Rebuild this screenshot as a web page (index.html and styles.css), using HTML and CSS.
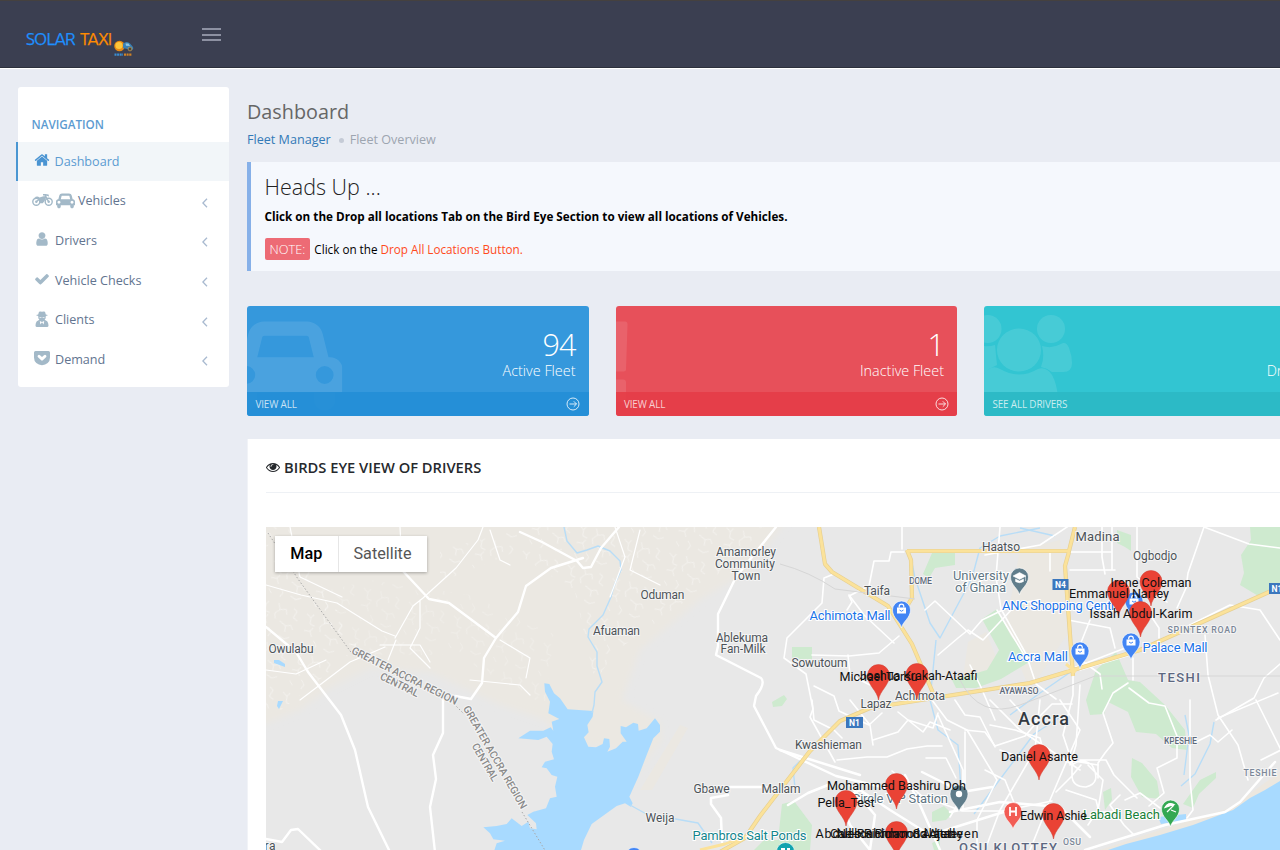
FILE: index.html
```html
<!DOCTYPE html>
<html lang="en">
<head>
<meta charset="utf-8">
<title>Solar Taxi - Fleet Dashboard</title>
<link rel="stylesheet" href="styles.css">
</head>
<body>
<svg class="defs" width="0" height="0" aria-hidden="true">
  <symbol id="car" viewBox="0 0 2048 1792"><path d="M480 1088q0-66-47-113t-113-47-113 47-47 113 47 113 113 47 113-47 47-113zm36-320h1016l-89-357q-2-8-14-17.500t-21-9.500h-768q-9 0-21 9.500t-14 17.500zm1372 320q0-66-47-113t-113-47-113 47-47 113 47 113 113 47 113-47 47-113zm160-96v384q0 14-9 23t-23 9h-96v128q0 80-56 136t-136 56-136-56-56-136v-128h-1024v128q0 80-56 136t-136 56-136-56-56-136v-128h-96q-14 0-23-9t-9-23v-384q0-93 65.500-158.500t158.500-65.500h28l105-419q23-94 104-157.500t179-63.500h768q98 0 179 63.500t104 157.500l105 419h28q93 0 158.500 65.500t65.500 158.500z"/></symbol>
  <symbol id="chev" viewBox="0 0 6 10"><path d="M5 .8.9 5 5 9.200" fill="none" stroke="currentColor" stroke-width="1.300"/></symbol>
  <symbol id="go" viewBox="0 0 14 14"><g fill="none" stroke="currentColor" stroke-width=".9"><circle cx="7" cy="7" r="6"/><path d="M3.500 7h7M7.800 4.300 10.500 7 7.800 9.700"/></g></symbol>
</svg>

<header class="topbar">
  <div class="brand">
    <span class="brand-solar">SOLAR</span><span class="brand-taxi">TAXI</span>
    <svg class="brand-mark" viewBox="0 0 21 18">
      <circle cx="6.500" cy="7" r="5.300" fill="#e98a12"/><circle cx="6" cy="6.500" r="3.600" fill="#fdc53b"/>
      <path d="M10 4.500q4-3 7 0l3 3.500q1 3-2 3l-8-2z" fill="#3a80b4"/><path d="M12.500 4.500h3l1.500 2.500-4-.3z" fill="#8fc4e0"/>
      <circle cx="17" cy="10" r="1.900" fill="#4b4638" stroke="#c5a05a" stroke-width=".7"/>
      <path d="M1.500 15.700h8.500" stroke="#3c8ed0" stroke-width="2.200" stroke-dasharray="2 .6"/><path d="M11 15.700h8" stroke="#d18325" stroke-width="2.200" stroke-dasharray="2 .6"/>
    </svg>
  </div>
  <div class="burger"><i></i><i></i><i></i></div>
</header>

<div class="page">
  <nav class="sidebar">
    <h3>NAVIGATION</h3>
    <ul>
      <li class="active"><svg class="ic" viewBox="0 0 1792 1792"><path d="M1472 992v480q0 26-19 45t-45 19h-384v-384h-256v384h-384q-26 0-45-19t-19-45v-480q0-1 .5-3t.5-3l575-474 575 474q1 2 1 6zm223-69l-62 74q-8 9-21 11h-3q-13 0-21-7l-692-577-692 577q-12 8-24 7-13-2-21-11l-62-74q-8-10-7-23.500t11-21.500l719-599q32-26 76-26t76 26l244 204v-195q0-14 9-23t23-9h192q14 0 23 9t9 23v408l219 182q10 8 11 21.500t-7 23.500z"/></svg><span>Dashboard</span></li>
      <li><svg class="ic moto" viewBox="0 0 21 14"><g fill="none" stroke="currentColor" stroke-width="1.400"><circle cx="4.300" cy="8.800" r="3.500"/><circle cx="16.700" cy="8.800" r="3.500"/><path d="M4.300 8.800 8 5.500M10 9.500l3.500-5.500M16.700 8.800 13 2M11 1.800h2.500l2.500.4"/></g><path d="M2.500 4.200q3-1.500 5 .2l4-1.200h2.800l-1 3.600-2.500 3.400H7.500Q7.500 7 5 5.500zM14.500 2.300l2.300-.8v2.300z"/><circle cx="4.300" cy="8.800" r="1.200"/><circle cx="16.700" cy="8.800" r="1.200"/></svg><svg class="ic carico"><use href="#car"/></svg><span>Vehicles</span><svg class="chev"><use href="#chev"/></svg></li>
      <li><svg class="ic" viewBox="0 0 1792 1792"><path d="M1536 1399q0 109-62.500 187t-150.500 78h-854q-88 0-150.500-78t-62.500-187q0-85 8.500-160.500t31.500-152 58.500-131 94-89 134.500-34.500q131 128 313 128t313-128q76 0 134.500 34.500t94 89 58.500 131 31.500 152 8.500 160.500zm-256-887q0 159-112.500 271.500t-271.500 112.500-271.500-112.500-112.500-271.500 112.500-271.500 271.500-112.500 271.500 112.500 112.500 271.500z"/></svg><span>Drivers</span><svg class="chev"><use href="#chev"/></svg></li>
      <li><svg class="ic" viewBox="0 0 1792 1792"><path d="M1671 566q0 40-28 68l-724 724-136 136q-28 28-68 28t-68-28l-136-136-362-362q-28-28-28-68t28-68l136-136q28-28 68-28t68 28l294 295 656-657q28-28 68-28t68 28l136 136q28 28 28 68z"/></svg><span>Vehicle Checks</span><svg class="chev"><use href="#chev"/></svg></li>
      <li><svg class="ic" viewBox="0 0 16 16"><path fill-rule="evenodd" d="M5 .8q1.500-.6 3 0 1.500-.6 3 0l.8 2.700 2 .5q.3.600-2 1.100l-.2 2.400-1 1.200 1.700 1q2 .8 2.200 5-.1 1.300-1.500 1.300H3q-1.400 0-1.500-1.300.2-4.200 2.200-5l1.700-1-1-1.200-.2-2.400q-2.300-.5-2-1.100l2-.5zM5.400 6.200l.5 1 1.500-.6h1.200l1.500.6.5-1zM5.800 10l.6 3.600L8 11.300l1.600 2.300.6-3.600L8 11z"/></svg><span>Clients</span><svg class="chev"><use href="#chev"/></svg></li>
      <li><svg class="ic pocket" viewBox="0 0 16 16"><path fill-rule="evenodd" d="M1.500 1h13q1.500 0 1.500 1.500v5q0 3.500-2.300 5.600T8 15.200 2.300 13.100 0 7.500v-5Q0 1 1.500 1zM4 5.200q-1 1.100 0 2l3.200 3.100q.8.700 1.600 0L12 7.200q1-.9 0-2-1-1-2 0l-2 1.900-2-1.900q-1-1-2 0z"/></svg><span>Demand</span><svg class="chev"><use href="#chev"/></svg></li>
    </ul>
  </nav>

  <main class="content">
    <h1>Dashboard</h1>
    <div class="crumbs"><a>Fleet Manager</a><i></i><span>Fleet Overview</span></div>

    <section class="callout">
      <h2>Heads Up ...</h2>
      <p class="strong">Click on the Drop all locations Tab on the Bird Eye Section to view all locations of Vehicles.</p>
      <p class="note"><b>NOTE:</b><span>Click on the <em>Drop All Locations Button.</em></span></p>
    </section>

    <section class="cards">
      <article class="card blue">
        <svg class="ghost" viewBox="0 0 342 110"><svg x="-18.500" y="8.400" width="114" height="99.800"><use href="#car"/></svg></svg>
        <div class="figures"><strong>94</strong><span>Active Fleet</span></div>
        <footer><span>VIEW ALL</span><svg><use href="#go"/></svg></footer>
      </article>
      <article class="card red">
        <svg class="ghost" viewBox="0 0 342 110"><path d="M-12 15.500H9q2.500 0 2.500 3L10 63q0 2.500-2.500 2.500H-10zM-12 73.500H7q3 0 3 3V93q0 3-3 3h-19z"/></svg>
        <div class="figures"><strong>1</strong><span>Inactive Fleet</span></div>
        <footer><span>VIEW ALL</span><svg><use href="#go"/></svg></footer>
      </article>
      <article class="card teal">
        <svg class="ghost" viewBox="0 0 342 110"><circle cx="3.500" cy="23" r="14"/><circle cx="67" cy="23" r="14"/><path d="M0 40q5 1 11-1 1 11 2 20l-8 4-5 5zM58 40q10 3 19-2 5-3 8 4 3 8 3 15 0 9-9 9H68q-5-4-11-5 4-10 1-21z"/><ellipse cx="35" cy="44" rx="22" ry="21.500"/><path d="M0 68q7-10 16-5 19 11 38 0 8-3 14 6 5 9 6 23v4H0z"/></svg>
        <div class="figures"><strong>&nbsp;</strong><span>Drivers</span></div>
        <footer><span>SEE ALL DRIVERS</span><svg><use href="#go"/></svg></footer>
      </article>
    </section>

    <section class="panel">
      <div class="panel-title"><svg viewBox="0 0 1792 1792"><path d="M1664 960q-152-236-381-353 61 104 61 225 0 185-131.500 316.500t-316.500 131.500-316.500-131.500-131.500-316.500q0-121 61-225-229 117-381 353 133 205 333.500 326.500t434.500 121.500 434.500-121.500 333.500-326.500zm-720-384q0-20-14-34t-34-14q-125 0-214.500 89.500t-89.500 214.500q0 20 14 34t34 14 34-14 14-34q0-86 61-147t147-61q20 0 34-14t14-34zm848 384q0 34-20 69-140 230-376.500 368.500t-499.500 138.500-499.500-139-376.500-368q-20-35-20-69t20-69q140-229 376.500-368t499.500-139 499.500 139 376.500 368q20 35 20 69z"/></svg><span>BIRDS EYE VIEW OF DRIVERS</span></div>
      <div class="map">
<svg class="map-canvas" viewBox="266 527 1014 323">
  <defs>
    <pattern id="lanes" width="47" height="41" patternUnits="userSpaceOnUse" patternTransform="rotate(17)"><path d="M3 5l5 3 2-4M8 8l1 6 5 1M20 3l3 6 6-2 2 5M23 9l-4 5 2 5M36 4l4 2M40 6l-2 7 5 2M5 22l6-1 3 5M11 21l2-4M26 20l7 3 1 6M33 23l5-2 3 4M17 29l4 4-2 5M6 33l4 4M29 34l6 2 5-3" fill="none" stroke="#fff" stroke-width=".8"/></pattern>
    <filter id="soft"><feGaussianBlur stdDeviation="3"/></filter>
    <g id="pin"><path d="M0 0C-1-9-11-15-11-24.500A11 11 0 0 1 11-24.500C11-15 1-9 0 0z" fill="#ea4335" stroke="#cf3f33" stroke-width=".5"/></g>
    <g id="poi"><path d="M0 18C-.8 12-9 8-9 0A9 9 0 0 1 9 0C9 8 .8 12 0 18z"/></g>
    <g id="bag"><path d="M-4.500-2.500h9v6h-9z" fill="#fff"/><path d="M-2.300-2.500v-1a2.300 2.300 0 0 1 4.600 0v1" fill="none" stroke="#fff" stroke-width="1.200"/><path d="M-2 0q2 2.500 4 0" fill="none" stroke="#4285f4"/></g>
  </defs>
  <rect x="266" y="527" width="1014" height="323" fill="#e8e8e8"/>

  <!-- undeveloped land -->
  <path filter="url(#soft)" fill="#ebe8e2" d="M255 515H790L750 570 700 600 640 650 622 700 660 722 662 740 625 790 645 735 630 752 560 740 545 720 500 705 430 672 370 668 330 688 300 710 255 728z"/>
  <path fill="url(#lanes)" opacity=".5" d="M266 527h22l70 120-35 30-57 45zM440 550l90-23h235l-60 60-90 65-20 30-20-90-60-40-75 30z"/>
  <path fill="url(#lanes)" opacity=".3" d="M290 600l80-20 100 15 85 40-10 70-90-50-90 0z"/>
  <path fill="#ebe8e2" d="M1020 550l40-10 10 90-40 60-25-60zM968 642l18-10 10 25-5 25-28-5zM640 790l40-65 8 3-36 62z"/>
  <path fill="#ece7df" d="M1100 850l60-20 70-22 50-36v16l-60 42-100 20z"/>

  <!-- parks -->
  <g fill="#ceeacf">
    <path d="M1250 527h30v63l-8 2-12 5-20-12 4-12-3-18 10-15zM1117 530l14 5v16l-6-4-8-4zM932 553h23v12l-20 3-6 10-6-4zM792 647h20v12h-20zM772 702l12-7 3 4-5 7-9 1zM982 619l15-10 14 27 20 25-30 18-25 9-20 0-4-8 35-10 12-20z"/>
    <path d="M1128 680l12 2 25 23 20 25 2 20-15-2-16-14-20-2-8-20-20-10-4 12-14 1-4-15 10-30 20-18zM1132 758l10 5 15 18 3 18-18-2-11-20zM1200 780l16-8v6l-17 16-6 14-10-4zM1103 792l8-4 1 12-7 10zM782 804l12-3 18 24-2 25h-56l10-10h14zM932 812l12-6 8 8-6 6-14 2zM932 843l8-4v11h-6z"/>
  </g>

  <!-- water -->
  <g fill="#a8daff">
    <path transform="translate(500 520) scale(.33333)" d="M133 490L148 492 162 520 180 535 203 568 280 573 278 590 262 615 266 637 252 652 265 680 288 682 308 672 312 655 328 657 330 680 322 695 348 685 368 665 380 665 362 640 362 618 378 622 400 608 414 612 416 632 440 625 465 595 480 615 480 635 460 655 440 705 415 770 388 830 398 850 392 860 375 850 350 858 275 912 252 960 240 1000H-20L-10 970 15 962-20 958-30 940-50 922-10 918 20 912 35 895 65 918 85 905 90 925 110 928 108 910 82 885 100 875 138 865 150 835 170 830 165 800 172 770 155 765 140 745 125 742 135 725 162 718 155 695 158 672 140 650 115 660 55 655 90 632 130 632 152 622 160 632 155 605 178 597 145 580 150 545 135 515z"/>
    <path d="M274 660l5 0 6 4 0 3-11-4zM278 701l5 0-4 8-2-3zM1108 850l18-6 34-9 33-10 40-15 17-12 15-8 15-9v70H1108z"/>
    <path d="M1158 817l28-3v6l-25 4z"/>
  </g>
  <g fill="none" stroke="#b8ddf7" stroke-width="1.400" stroke-linejoin="round">
    <path d="M564 527l3 14 10 12 10-3 11-4 12 5 10 10 1 9-5 11-3 8-2 8-8 18-14 14-1 8 9 15 0 14 5 16-7 10-1 13-2 8M630 805l20 11 20 2 28 5 14 20M808 753l-15 15 2 20M1040 528l-40 8-20 12-8 30-32 60-10-15-15-45-3-15M936 640l-6 60 8 30 20 15 4 60M1062 716l-28 18-60 80M1185 715l4 20-5 40M1214 722l-4 22-15 30-14 12M1010 715l30-22 35-24M1020 528l35 8"/>
  </g>

  <!-- streets -->
  <g fill="none" stroke="#fff" stroke-linejoin="round" stroke-linecap="round">
    <g stroke-width="2.400">
      <path d="M266 627l30 25 12 20 33 43 14 35 13 57 22 45M266 839l16 3 9-12 7-1 25 24"/>
      <path d="M402 570l27 29 20 4 47 35M520 532l22 10 35 19 6 7 8-1 10-19 18-21M583 558l-32 10-25 18-8 26-22 26-12 20-2 25-11 16-16-3"/>
      <path d="M443 698v35l-10 22 3 24-6 28 5 45M776 527l-40 50-18 37 0 32-2 9 45 23q5 5-5 18l-2 10 22 42 60 28 50 12"/>
    </g>
    <g stroke-width="1.200">
      <path d="M266 585l35 10 36 8 45 28 13 5M290 527l10 50 42 20M395 638l18-32 10-8 33-30 22-28 5-13M396 640l-8 20M420 600v28l-10 20 20 20M380 645l40 0 10 17M266 670l30 4 30-14M300 700l50-38 35-15M500 640l30 18-4 20M470 680l50 5 10 10M400 527l1 20M490 530l10 30 10 5M615 527l10 30-15 40M640 530l-10 40 30 15"/>
    </g>
    <g stroke-width="1.600">
      <path d="M834 574l-10 4-2 25-35 35-3 20 22 16 7 35-3 8 25 45M847 610l5-8-3-6 20-10 5-25h15l2-9h13M902 527l0 22M925 610l10-9 35 33 12-14 31-15 25-5"/>
      <path d="M849 595l15 20 30 28M812 655l37 1 30-3 20-17M848 655l2 20 20 10M814 686l20 10 5 15 30 14 13-12M812 700l2 20 20 10 8 8M850 700l20 25 3 20M837 760l30-3 20 0 20-8 20-3 15 0M873 740l25-8 10-12 25 8 5-15M898 712l25 20 7-10 20 8M926 758l20 0 10 20M938 715l25 55 0 40M965 730l20 2 10 14 30-10 12-14M990 725l25 5 25 8 5 20"/>
      <path d="M938 655l20-17 10-8 15 10 30-32M932 700l15 20 20 10 30 50-20 40 0 30M965 732v60l-15 25M990 700l30 30 60 40M955 700l10 15 15 2 15 30M970 665l10 20 15 35M1000 527l-4 50 5 32 25 45 10 30 20 15M985 555l55-10 30-20M997 610l32 53M1010 700l22 24 20-20 20 0M1050 551v20M1068 552h44l0-25M1112 552v18M1070 570h20l25 0M1102 527v30l3 17M1137 527v50l30 25M1204 527l-16 46-2 15-9 20"/>
      <path d="M1204 527l45 17 31 4M1068 620l42 8 5 20M1090 620l-10 25M1070 652l30 22 2 15M1068 670l60-23M1147 610l12 18 0 10M1080 670l50-15 100-50 30 5 20 30M1133 658v22M1205 635l3 40 10 40 20 30 10 35M1216 720l38-22 10-20 16-14M1256 700l25 50-20 10M1080 685l-4 60-6 20M1073 675v20l-10 40 10 30M1128 683l-15 10-10 20 10 30-8 10-7 10 0 15M1129 688l20 15 16 3 12 30 0 22-20 10 7 25-15 13"/>
      <path d="M1080 760l26 0 8 15 23 23M1068 760l30 5M1072 765q10-8 20 0 10 18-6 22-14 0-14-12zM1056 792l15-15 10-12M1066 790l30 10 3 12 20 0M1088 765l15 15-5 30-10 15M1125 800l15-7 20 15M1120 795l-10 10 14 20 10 10M1052 801l-50 10-40 0-40-15-30-25M1040 700l-5 50-35 60-15 40M1060 700l20 30-30 70-20 50M1000 750l30 10 20-10M985 770l20 10 12 30M1190 700v80l3 30-6 8M1190 745l20-10 8 7 14-12M1218 718l60-25"/>
    </g>
    <g stroke-width="2.500"><path d="M1085 850l80-25 60-13 15-10 35-40M780 750l80 25M840 800l20-10 30 20 40 25 80-25M950 812l50-10 60 5 30 30M840 800l10 25 20 25M905 775l15 30 20 45M922 772l40 20 30-5M850 785l25 30-5 35M730 787l35 0 20 4M728 795l-17 3 0 6 10 14 1 24M788 805l20-12 20-8"/></g>
  </g>

  <!-- highways -->
  <g fill="none" stroke-linejoin="round">
    <path stroke="#e6cf91" stroke-width="4.200" d="M819 527l6 37 7 8 56 34 24 38 21 49M907 550l4 10 1 38-11 18M907 551h162l6-24M1069 552l-4 14 8 110M1280 587l-60 27-80 36-110 33-160 25-30 13-30 30-50 65-15 22-25 14-18 8"/>
    <path stroke="#fbe29a" stroke-width="2.900" d="M819 527l6 37 7 8 56 34 24 38 21 49M907 550l4 10 1 38-11 18M907 551h162l6-24M1069 552l-4 14 8 110M1280 587l-60 27-80 36-110 33-160 25-30 13-30 30-50 65-15 22-25 14-18 8M1066 664l10 8M700 850l25-6 25-9"/>
  </g>
  <path d="M268 533l30 46 55 76M454 704l10 10M522 812l24 40" fill="none" stroke="#aaa" stroke-width="1" stroke-dasharray="1.500 2"/>
  <path d="M780 564q30 8 55 25l80 10M960 680q20 40 60 25t75-29h190" fill="none" stroke="#d6d6d6"/>

  <!-- place names -->
  <g class="place" text-anchor="middle">
    <text x="291" y="653" textLength="45">Owulabu</text><text x="270" y="850" textLength="11">ra</text>
    <text x="662.500" y="599" textLength="44">Oduman</text><text x="616.500" y="635" textLength="47">Afuaman</text>
    <text x="746" y="556" textLength="60">Amamorley</text><text x="745" y="568" textLength="60">Community</text><text x="746" y="579.500" textLength="29">Town</text>
    <text x="742" y="641.500" textLength="52">Ablekuma</text><text x="743" y="653" textLength="45">Fan-Milk</text>
    <text x="819.500" y="666.500" textLength="56">Sowutoum</text><text x="877" y="594.500" textLength="26">Taifa</text>
    <text x="1001" y="550.500" textLength="38">Haatso</text><text x="1097.500" y="541" textLength="44" class="mid">Madina</text>
    <text x="1155" y="559.500" textLength="44">Ogbodjo</text><text x="920" y="700" textLength="50">Achimota</text><text x="876" y="708" textLength="31">Lapaz</text>
    <text x="828.500" y="749" textLength="67">Kwashieman</text><text x="711.500" y="792.500" textLength="36">Gbawe</text><text x="781" y="793" textLength="39">Mallam</text><text x="660" y="821.500" textLength="29">Weija</text>
    <g class="area"><text x="920.500" y="584" textLength="23">DOME</text><text x="1019" y="694" textLength="39">AYAWASO</text><text x="1180.500" y="743.500" textLength="33">KPESHIE</text></g>
    <g class="wide"><text x="1202" y="633" textLength="69">SPINTEX ROAD</text><text x="1260" y="776" textLength="33">TESHIE</text><text x="1072" y="845" textLength="18">OSU</text></g>
    <g class="district"><text x="1179" y="682" textLength="42">TESHI</text><text x="1008" y="852" textLength="98">OSU KLOTTEY</text></g>
    <text x="1043.500" y="725" textLength="51" class="city">Accra</text>
    <g class="region"><text transform="translate(403 679) rotate(26.500)" textLength="117">GREATER ACCRA REGION</text><text transform="translate(398 688) rotate(26.500)" textLength="42">CENTRAL</text><text transform="translate(492 759) rotate(60)" textLength="117">GREATER ACCRA REGION</text><text transform="translate(482 764) rotate(60)" textLength="42">CENTRAL</text></g>
  </g>

  <!-- points of interest -->
  <g class="poi-label">
    <g fill="#1a73e8"><text x="809.500" y="619.500" textLength="81">Achimota Mall</text><text x="1002" y="609.500" textLength="120">ANC Shopping Centre</text><text x="1008" y="660.500" textLength="60">Accra Mall</text><text x="1142.500" y="651.500" textLength="65">Palace Mall</text></g>
    <g fill="#607583"><text x="953" y="580" textLength="56">University</text><text x="955" y="592" textLength="51">of Ghana</text><text x="852" y="803" textLength="96">Circle VIP Station</text></g>
    <text x="692.500" y="840" textLength="114" fill="#12858d">Pambros Salt Ponds</text><text x="1083" y="819" textLength="77" fill="#188038">Labadi Beach</text>
  </g>
  <g fill="#4285f4" stroke="#fff" stroke-width=".6"><use href="#poi" x="901.500" y="610"/><use href="#poi" x="1080" y="651"/><use href="#poi" x="1131" y="642"/><use href="#poi" x="1134" y="601"/><circle cx="634" cy="856" r="8.500"/></g>
  <use href="#bag" x="901.500" y="610"/><use href="#bag" x="1080" y="651"/><use href="#bag" x="1131" y="642"/><use href="#bag" x="1134" y="601"/>
  <g fill="#607d8b" stroke="#fff" stroke-width=".6"><use href="#poi" x="1019.500" y="577"/><use href="#poi" x="959" y="794"/></g>
  <path d="M1013 576l6.500-3.500 6.500 3.500-6.500 3.500zM1015.500 579v2.500q4 2.500 8 0V579l-4 2zM1025.500 576v5" fill="#fff" stroke="#fff" stroke-width=".5"/><circle cx="959" cy="794" r="3.200" fill="#fff"/>
  <g stroke="#fff" stroke-width=".6"><use href="#poi" x="1170.500" y="809" fill="#34a853"/><circle cx="785.500" cy="851.500" r="9" fill="#12a4af"/><use href="#poi" x="1013" y="811.500" fill="#f25c54"/></g>
  <path d="M1165 807.500q3-6 9-3zM1167 812l7-7M1171 810l5 2" fill="#fff" stroke="#fff" stroke-width="1.200"/><path d="M1010 807v9M1016 807v9M1010 811.500h6" stroke="#fff" stroke-width="1.800"/><path d="M781 849h4M787 849h3" stroke="#fff" stroke-width="2"/>
  <g class="shield"><rect x="1052.500" y="579" width="16" height="11"/><text x="1060.500" y="587.700">N4</text><rect x="846" y="717" width="17" height="11"/><text x="854.500" y="725.700">N1</text><rect x="1269" y="583" width="17" height="11"/><text x="1277" y="591.700">N1</text></g>

  <!-- vehicles -->
  <use href="#pin" x="1151" y="606"/><use href="#pin" x="1118.500" y="616"/><use href="#pin" x="1140.500" y="637"/><use href="#pin" x="878.500" y="700"/><use href="#pin" x="917" y="699"/><use href="#pin" x="1039" y="780"/><use href="#pin" x="896.500" y="809"/><use href="#pin" x="846" y="826"/><use href="#pin" x="1053.500" y="839"/><use href="#pin" x="896.500" y="857"/>
  <g class="driver" text-anchor="middle">
    <text x="1151" y="587" textLength="81">Irene Coleman</text><text x="1119" y="597.500" textLength="100">Emmanuel Nartey</text><text x="1141" y="618" textLength="103">Issah Abdul-Karim</text>
    <text x="878.500" y="681" textLength="78">Michael Torsu</text><text x="918.500" y="680" textLength="118">Joshua Krakah-Ataafi</text><text x="1039.500" y="761" textLength="77">Daniel Asante</text>
    <text x="896.500" y="790" textLength="139">Mohammed Bashiru Doh</text><text x="846" y="807" textLength="57">Pella_Test</text><text x="1053.500" y="819.500" textLength="67">Edwin Ashie</text>
    <text x="897" y="837.500" textLength="163">Abdul-Rahman Salaudeen</text><text x="896.500" y="837.500" textLength="133">Caleb Richmond Adjetey</text><text x="896.500" y="837.500" textLength="119">Nelson Richmond Attah</text>
  </g>
</svg>
        <div class="map-type"><button class="on">Map</button><button>Satellite</button></div>
      </div>
    </section>
  </main>
</div>
</body>
</html>
```

FILE: styles.css
```css
* { box-sizing: border-box; }
html, body { width: 1280px; height: 850px; overflow: hidden; }
body { margin: 0; background: #e9ecf3; font-family: "Open Sans", sans-serif; font-size: 12.6px; color: #333; }
h1, h2, h3, p, ul { margin: 0; padding: 0; font-weight: 400; }
ul { list-style: none; }
.defs { position: absolute; }
svg { flex: none; fill: currentColor; }

.topbar { height: 68px; background: #3b3f51; border-top: 1px solid #45413f; border-bottom: 1px solid #2c303c; display: flex; align-items: flex-start; box-shadow: 0 1px 0 #fff; }
.brand { width: 202px; padding: 27px 0 0 26px; display: flex; align-items: flex-start; font: 17px/22px Ubuntu, "Noto Sans", sans-serif; }
.brand-solar { width: 54px; color: #1e90ff; letter-spacing: -.8px; -webkit-text-stroke: .25px; }
.brand-taxi { width: 33px; color: #ff8c00; letter-spacing: -.9px; -webkit-text-stroke: .25px; }
.brand-mark { width: 21px; height: 18px; margin-top: 11px; }
.burger { width: 19px; padding-top: 27px; display: grid; gap: 3.500px; }
.burger i { height: 2px; background: #8d91a2; }

.page { display: flex; align-items: flex-start; padding: 19px 0 0 18px; gap: 18px; }
.sidebar { flex: none; width: 211px; height: 300px; padding-top: 27px; background: #fff; border-radius: 3px; }
.sidebar h3 { padding-left: 13.500px; font-size: 11.700px; line-height: 21px; height: 27.500px; font-weight: 600; color: #5c9bd1; }
.sidebar li { display: flex; align-items: center; height: 39.600px; padding: 0 21px 0 16px; color: #62748f; }
.sidebar li.active { color: #5b9bd1; background: #f2f6f9; margin-left: -2.500px; border-left: 2.500px solid #4a96d2; height: 39px; margin-bottom: .6px; }
.sidebar .ic { width: 16px; height: 16px; margin: -2px 5px 0 0; color: #a3b9c8; }
.sidebar .active .ic { color: #4a94d2; }
.sidebar .ic.moto { width: 21px; height: 14px; margin: -2px 3px 0 -2.500px; }
.sidebar .ic.carico { width: 19px; height: 17px; margin: 0 3.500px 0 0; }
.chev { width: 6px; height: 10px; margin: 4px 0 0 auto; color: #a9bad0; }

.content { flex: none; width: 1078px; padding-top: 9.500px; }
h1 { font-size: 19.800px; line-height: 30px; color: #666; }
.crumbs { display: flex; align-items: center; height: 25px; color: #9da5b0; }
.crumbs a { color: #337ab7; }
.crumbs i { width: 5px; height: 5px; margin: 3px 6px 0 8px; border-radius: 50%; background: #c5cbd6; }

.callout { height: 109px; margin-top: 10.500px; padding: 9px 13.500px; border-left: 4.500px solid #86b0e8; background: #f5f8fd; color: #000; }
.callout h2 { font-size: 21.500px; line-height: 32px; font-weight: 300; color: #222; }
.callout .strong { margin-top: 4px; font-size: 11.700px; line-height: 18px; font-weight: 700; }
.callout .note { display: flex; align-items: center; gap: 4px; margin-top: 13px; height: 22px; font-size: 11.700px; }
.note b { padding: 0 5px; height: 22px; line-height: 22px; border-radius: 2px; background: #ed6b75; color: #fff; font-weight: 300; font-size: 12.800px; }
.note em { font-style: normal; color: #ff4a1c; }

.cards { display: grid; grid-template-columns: repeat(3, 341.500px); gap: 27px; margin-top: 35px; }
.card { position: relative; height: 109.500px; display: flex; flex-direction: column; justify-content: space-between; border-radius: 3px; overflow: hidden; color: #fff; }
.blue { background: #3598dc; } .red { background: #e7505a; } .teal { background: #32c5d2; }
.ghost { position: absolute; left: 0; top: 0; width: 342px; height: 110px; opacity: .1; }
.figures { display: grid; justify-items: end; padding: 19px 13px 0; font-weight: 300; }
.figures strong { font-size: 30.600px; line-height: 38px; font-weight: 300; letter-spacing: -1px; }
.figures span { font-size: 14.400px; line-height: 15px; }
.card footer { position: relative; display: flex; align-items: center; justify-content: space-between; height: 24px; padding: 0 8.500px; font-size: 9.900px; color: rgba(255,255,255,.75); }
.card footer span { letter-spacing: -.15px; }
.card footer svg { width: 14px; height: 14px; color: rgba(255,255,255,.9); }
.blue footer { background: rgba(36,142,214,.92); } .red footer { background: rgba(229,61,72,.92); } .teal footer { background: rgba(43,184,196,.92); }

.panel { margin-top: 23.500px; height: 430px; padding: 10px 18px; background: #fff; border-left: 1px solid #f1f3f7; }
.panel-title { display: flex; align-items: center; gap: 4px; height: 44px; padding-bottom: 7px; border-bottom: 1px solid #eef1f5; font-size: 14.700px; font-weight: 600; color: #26292d; }
.panel-title svg { width: 14px; height: 14px; }
.map { position: relative; width: 1014px; height: 323px; margin-top: 34px; }
.map-canvas { display: block; width: 1014px; height: 323px; }
.map-type { position: absolute; left: 9px; top: 8.500px; display: flex; height: 36px; background: #fff; box-shadow: 0 1px 3px rgba(0,0,0,.3); }
.map-type button { width: 89px; padding: 0; border: 0; border-left: 1px solid #e6e6e6; background: none; font: 16.200px Roboto, sans-serif; color: #565656; }
.map-type .on { width: 62.500px; border: 0; font-weight: 500; color: #000; }

.map text { font-family: Roboto, sans-serif; }
.place text { font-size: 12px; fill: #4d5358; stroke: #f4f4f4; stroke-width: 2px; paint-order: stroke; }
.place text.mid { font-size: 13px; }
.place .area text { font-size: 8.800px; font-weight: 500; fill: #5e6a7b; }
.place .wide text { font-size: 8.800px; font-weight: 500; fill: #7b8798; }
.place .district text { font-size: 13px; font-weight: 500; fill: #5c6780; }
.place text.city { font-size: 18px; font-weight: 500; fill: #333a42; }
.place .region text { font-size: 10.500px; font-weight: 500; fill: #8a8a8a; }
.poi-label text { font-size: 13px; stroke: #fff; stroke-width: 2px; paint-order: stroke; }
.shield rect { fill: #3b77bd; }
.shield text { font-size: 8.500px; font-weight: 700; fill: #fff; text-anchor: middle; }
.driver text { font-size: 12.600px; fill: #111; }
```
